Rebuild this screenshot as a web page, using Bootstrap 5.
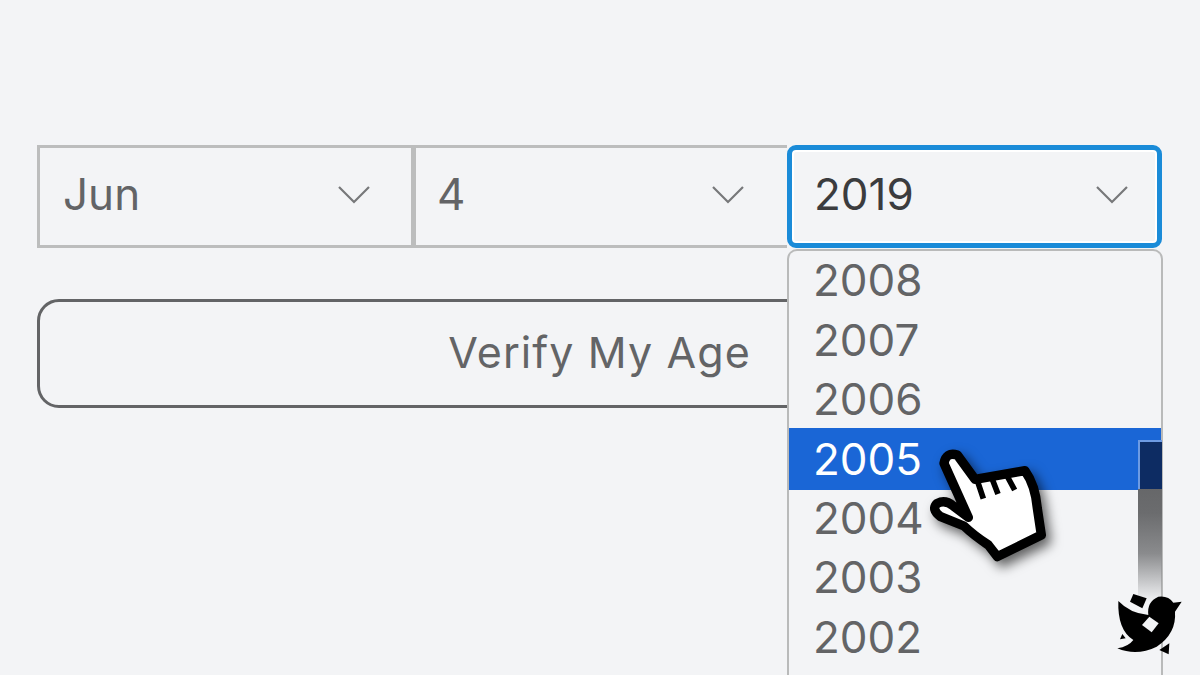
<!DOCTYPE html>
<html lang="en">
<head>
    <meta charset="UTF-8">
    <title>Verify My Age</title>
    <link href="https://cdn.jsdelivr.net/npm/bootstrap@5.3.0/dist/css/bootstrap.min.css" rel="stylesheet">
    <style>
        html, body { height: 100%; overflow: hidden; }
        body { background: #f3f4f6; font-family: Inter, "Noto Sans", sans-serif; color: #636466; }
        .age-form { padding: 145px 38px 0 37px; width: 1200px; position: relative; height: 675px; }
        .date-row { height: 103px; }
        .date-box {
            flex: 1 1 0; padding: 0 41px 5px 23px; font-size: 44px; background: transparent;
            border: 3px solid #bcbdbd; border-right-width: 0; border-radius: 0;
        }
        .date-box.day-box { border-left-width: 5px; padding-right: 43px; padding-left: 21px; }
        .date-box svg { width: 32px; height: 18px; margin-top: 2px; }
        .date-box.year-box {
            flex: 0 0 375px; color: #3b3c3e; border: 5px solid #1a8bd8; border-radius: 9px; padding-left: 22px; padding-right: 29px;
            box-shadow: inset 0 0 0 2px #fff;
        }
        .verify-btn {
            width: 100%; height: 109px; margin-top: 51px; padding-bottom: 9px; font-size: 43px; font-weight: 400; color: #636466;
            letter-spacing: 1.1px; border: 3px solid #636466; border-radius: 22px; background: transparent;
        }
        .year-menu {
            position: absolute; left: 787px; top: 249px; width: 376px; height: 426px; margin: 0; padding: 0;
            list-style: none; background: #f3f4f6; border: 2px solid #b9baba; border-bottom: 0; border-radius: 10px 10px 0 0; overflow: hidden;
        }
        .year-menu li { height: 59.5px; line-height: 59.5px; padding-left: 24px; font-size: 44px; white-space: nowrap; }
        .year-menu li.picked { height: 62px; margin-top: -2px; margin-bottom: -1px; line-height: 62px; background: #1a66d6; color: #fff; }
        .scroll-thumb {
            position: absolute; left: 1138px; top: 440px; width: 24px; height: 162px;
            background: linear-gradient(#5d5e60 0%, #6b6c6e 45%, #8a8b8d 70%, rgba(243, 244, 246, 0) 100%);
        }
        .scroll-dark {
            position: absolute; left: 1138px; top: 440px; width: 24px; height: 49px; background: #0d2c63;
            border-top: 2px solid #6d9be3; border-left: 2px solid #6d9be3;
        }
        .hand-cursor { position: absolute; left: 920px; top: 420px; width: 140px; height: 150px; filter: drop-shadow(5px 6px 6px rgba(0, 0, 0, .6)); }
        .bird-mark { position: absolute; left: 1090px; top: 420px; width: 110px; height: 255px; }
    </style>
</head>
<body>
    <div class="age-form">
        <div class="date-row d-flex">
            <div class="date-box d-flex align-items-center justify-content-between">
                <span>Jun</span>
                <svg viewBox="0 0 32 18" fill="none" stroke="#77787a" stroke-width="2.2"><path d="M1 1 L16 16 L31 1"/></svg>
            </div>
            <div class="date-box day-box d-flex align-items-center justify-content-between">
                <span>4</span>
                <svg viewBox="0 0 32 18" fill="none" stroke="#77787a" stroke-width="2.2"><path d="M1 1 L16 16 L31 1"/></svg>
            </div>
            <div class="date-box year-box d-flex align-items-center justify-content-between">
                <span>2019</span>
                <svg viewBox="0 0 32 18" fill="none" stroke="#77787a" stroke-width="2.2"><path d="M1 1 L16 16 L31 1"/></svg>
            </div>
        </div>
        <button type="button" class="btn verify-btn d-block">Verify My Age</button>
    </div>

    <ul class="year-menu">
        <li>2008</li>
        <li>2007</li>
        <li>2006</li>
        <li class="picked">2005</li>
        <li>2004</li>
        <li>2003</li>
        <li>2002</li>
    </ul>
    <div class="scroll-thumb"></div>
    <div class="scroll-dark"></div>

    <svg class="hand-cursor" viewBox="0 0 420 450">
        <path d="M72 130 Q78 95 112 105 L165 178 L315 152 Q346 195 352 265 L364 345 L232 410 L205 375 Q160 345 132 318 L62 290 Q32 268 52 250 Q76 238 100 258 L145 292 Z" fill="#fff" stroke="#000" stroke-width="28" stroke-linejoin="round"/>
        <path d="M172 182 L190 236 M214 170 L234 222 M258 162 L284 210" stroke="#000" stroke-width="17" fill="none"/>
    </svg>

    <svg class="bird-mark" viewBox="0 0 330 765">
        <path d="M85 543 Q120 580 175 585 Q170 545 205 530 Q235 526 250 548 L275 545 L255 575 Q260 640 200 680 Q140 710 82 685 Q115 680 130 660 Q82 630 85 543Z" fill="#000"/>
        <path d="M156 615 L178 590 L206 610 L185 637Z" fill="#f3f4f6"/>
        <path d="M120 545 L130 522 L170 535 L157 565Z" fill="#000"/>
        <path d="M90 658 L97 642 L107 655Z M208 690 L238 670 L236 703Z" fill="#000"/>
    </svg>
</body>
</html>
